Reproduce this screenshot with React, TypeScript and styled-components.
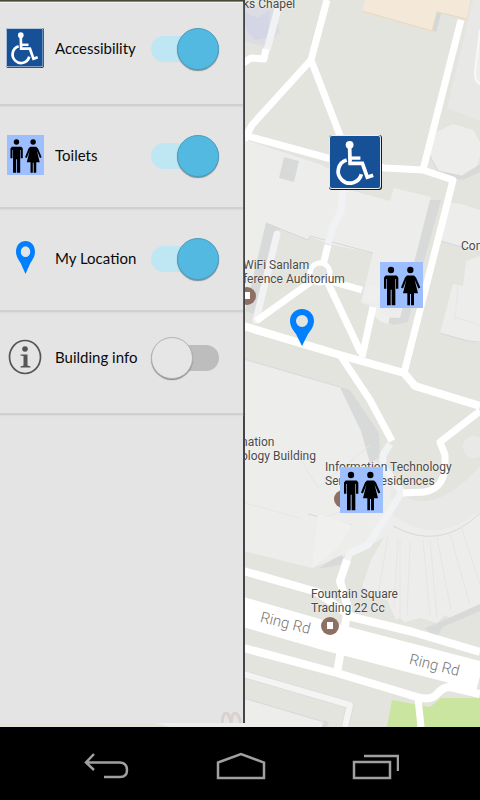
import React, { useState } from "react";
import styled, { createGlobalStyle } from "styled-components";

const GlobalStyle = createGlobalStyle`
  * { box-sizing: border-box; }
  body { margin: 0; background: #000; }
`;

const Screen = styled.div`
  display: flex;
  flex-direction: column;
  min-height: 100vh;
  overflow: hidden;
  font-family: Lato, "Liberation Sans", sans-serif;
`;

const Stage = styled.div`
  position: relative;
  flex: 1;
  display: flex;
  overflow: hidden;
  background: #e3e4de;
`;

const MapLayer = styled.main`
  position: absolute;
  inset: 0;
  overflow: hidden;
`;

const MapArt = styled.svg`
  display: block;
  width: 100%;
  height: 100%;
`;

const MapLabel = styled.div<{ $x: number; $y: number }>`
  position: absolute;
  left: ${(p) => p.$x}px;
  top: ${(p) => p.$y}px;
  font: 12px/14px Roboto, sans-serif;
  color: #4c4a48;
  white-space: pre;
  text-shadow: 0 0 2px #fff;
`;

const StreetLabel = styled(MapLabel)`
  font-size: 15px;
  font-weight: 300;
  line-height: 18px;
  color: #777;
  transform: rotate(14deg);
`;

const MapPin = styled.button<{ $x: number; $y: number; $w: number; $h: number }>`
  position: absolute;
  left: ${(p) => p.$x}px;
  top: ${(p) => p.$y}px;
  width: ${(p) => p.$w}px;
  height: ${(p) => p.$h}px;
  padding: 0;
  border: 0;
  background: none;
  cursor: pointer;
  svg { display: block; width: 100%; height: 100%; }
`;

const Drawer = styled.aside`
  position: relative;
  display: flex;
  flex-direction: column;
  width: 51%;
  margin-bottom: 4px;
  background: #e4e4e4;
  border-right: 2px solid #444547;
`;

const DrawerEdge = styled.div`
  height: 3px;
  background: linear-gradient(#454936 0 1px, #85877c 1px 2px, #f2f2f0 2px);
`;

const Row = styled.label<{ $lift?: boolean }>`
  display: grid;
  grid-template-columns: 50px 1fr 68px;
  column-gap: 5px;
  align-items: center;
  min-height: 103px;
  padding: 0 24px ${(p) => (p.$lift ? 12 : 4)}px 0;
  border-bottom: 2px solid #d0d0d0;
  box-shadow: 0 1px 1px #dcdcdc;
  font-size: 15px;
  line-height: 18px;
  color: #0a0a0a;
  white-space: nowrap;
  cursor: pointer;
`;

const RowIcon = styled.span<{ $w: number; $h: number }>`
  justify-self: center;
  width: ${(p) => p.$w}px;
  height: ${(p) => p.$h}px;
  svg { display: block; width: 100%; height: 100%; }
`;

const Switch = styled.input`
  appearance: none;
  display: grid;
  align-items: center;
  width: 68px;
  height: 40px;
  margin: 0;
  cursor: pointer;

  &::before,
  &::after {
    content: "";
    grid-area: 1 / 1;
  }
  &::before {
    height: 26px;
    margin-left: 4px;
    border-radius: 13px;
    background: #bdbdbd;
  }
  &::after {
    width: 40px;
    height: 40px;
    border-radius: 50%;
    border: 1px solid #b4b4b4;
    background: #e6e6e6;
    box-shadow: 0 1px 1px #858585;
  }
  &:checked::before {
    margin: 0 4px 0 0;
    background: #bfe6f3;
  }
  &:checked::after {
    justify-self: end;
    border-color: #479fbf;
    background: #54b9e0;
    box-shadow: 0 1px 1px #7c8c92;
  }
`;

const GhostMark = styled.svg`
  width: 22px;
  height: 11px;
  margin: auto 0 0 auto;
`;

const NavBar = styled.nav`
  display: grid;
  grid-template-columns: repeat(3, 1fr);
  align-items: center;
  height: 73px;
  padding: 5px 38px 0 40px;
  background: #000;
`;

const NavButton = styled.button`
  display: flex;
  justify-content: center;
  padding: 8px 0;
  border: 0;
  background: none;
  cursor: pointer;
`;

const WheelchairIcon = () => (
  <svg viewBox="0 0 54 56" preserveAspectRatio="none" aria-hidden="true">
    <rect width="54" height="56" rx="3" fill="#101820" />
    <rect width="53" height="55" rx="3" fill="#e8eef4" />
    <rect x="1" y="1" width="51" height="53" rx="2" fill="#165198" />
    <circle cx="21" cy="10" r="4" fill="#fff" />
    <path d="M21 12 21.500 29H34L39 43 45 41" fill="none" stroke="#fff" strokeWidth="3.800" />
    <path d="M21 23.500H32" stroke="#fff" strokeWidth="3.400" />
    <path d="M18 25.500A12 12 0 1 0 33 40" fill="none" stroke="#fff" strokeWidth="3.800" />
  </svg>
);

const ToiletsIcon = () => (
  <svg viewBox="0 0 129 137" preserveAspectRatio="none" aria-hidden="true">
    <rect width="129" height="137" fill="#9ebfff" />
    <circle cx="33" cy="24" r="9.500" />
    <path d="M17 40H50L55 46V80H48V51H46V129H35V83H32V129H21V51H19V80H12V46Z" />
    <circle cx="91" cy="24" r="9.500" />
    <path d="M81 40H102L108 46 121 76 115 79 104 53 114 93H102V129H93V95H90V129H82V93H69L79 53 69 79 63 76 75 46Z" />
  </svg>
);

const LocationIcon = () => (
  <svg viewBox="0 0 24 37" preserveAspectRatio="none" aria-hidden="true">
    <path fillRule="evenodd" fill="#007fff" d="M12 0C5 0 0 5 0 12C0 17 3 21 6 25L12 37L18 25C21 21 24 17 24 12C24 5 19 0 12 0ZM12 6A6 6 0 1 1 12 18A6 6 0 1 1 12 6Z" />
  </svg>
);

const InfoIcon = () => (
  <svg viewBox="0 0 34 36" aria-hidden="true">
    <ellipse cx="17" cy="18" rx="15.500" ry="16.500" fill="none" stroke="#555" strokeWidth="1.700" />
    <circle cx="17" cy="10" r="2.800" fill="#555" />
    <path d="M12.500 15.500H19.500V26.500L22.500 27.500V28.500H12.500V27.500L15.500 26.500V17L12.500 16.500Z" fill="#555" />
  </svg>
);

const Poi = ({ x, y }: { x: number; y: number }) => (
  <g>
    <circle cx={x} cy={y} r="9" fill="#8e6f64" />
    <rect x={x - 3} y={y - 4} width="6" height="7" fill="#fff" />
  </g>
);

const CampusMap = () => (
  <MapArt viewBox="0 0 480 727" preserveAspectRatio="xMinYMin slice" aria-hidden="true">
    <rect width="480" height="727" fill="#e3e4de" />

    <g fill="#ededec">
      <path d="M240 138 322 165 345 178 350 190 390 201 394 188 431 197 411 290 404 318Q395 324 379 317L376 309 361 302 373 253 333 245 310 237 308 240 266 223 246 310H240Z" />
      <path d="M448 202 437 240 480 252V210L461 204Z" />
      <path d="M453 284 463 286 466 261 480 256V343L440 333Z" />
      <path d="M240 358 340 387 361 431 372 460 383 465 402 493 389 534 368 547 350 553 312 568 240 550Z" />
      <path d="M393 514Q430 547 480 500V610L455 620 445 615 437 623 420 618 405 622 400 618 396 620 387 600 376 598 362 587 371 560 388 530Z" />
      <path d="M240 697 324 722 322 727H240Z" />
    </g>
    <path d="M473 0 447 108 480 121V0Z" fill="#e8e8e7" />
    <path d="M482 85Q474 82 475 72L480 30" fill="#eee" stroke="#f8f8f8" strokeWidth="2" />
    <path d="M365 0 362 11 432 31 437 12 467 19 470 0Z" fill="#f4e9d8" />
    <path d="M362 11 432 31 437 12 467 19" fill="none" stroke="#ead8bd" />
    <path d="M433 31 437 12 441 14 436 32Z" fill="#d3d8d7" />
    <path d="M240 6 275 8 280 33 263 46 240 40Z" fill="#dcdde2" />
    <path d="M244 12 258 18 270 10 268 38 255 40 246 30Z" fill="#d5d6e5" />
    <path d="M434 175 463 180 480 172V165L455 170Z" fill="#d8dada" />

    <g fill="#d7dad9">
      <path d="M284 157 299 161 294 182 279 178Z" />
      <path d="M430 200 441 200 422 268 408 322 393 325 379 317 400 318Z" />
      <path d="M266 223 280 228 257 315 245 311Z" />
      <path d="M340 387 350 390 379 433 380 457 370 463 361 431Z" />
      <path d="M333 559 342 555 344 564 318 569Z" />
      <path d="M440 622 480 604V611L443 627 436 638 425 628Z" />
      <path d="M324 720 329 722 327 727H322Z" />
    </g>
    <g fill="none" stroke="#d8d8dd">
      <path d="M266 223 308 240 310 236 373 253" />
      <path d="M437 240 480 252M440 333 467 341 480 342" />
      <path d="M240 358 340 387M240 697 324 722" />
      <path d="M308 514 352 525" />
      <path d="M391 508Q440 532 480 495M393 526Q440 552 480 513" />
    </g>
    <path d="M390 485Q428 525 480 466V510Q435 549 393 514Z" fill="#e9eae8" />
    <g fill="none" stroke="#e6e6e8" strokeWidth="1">
      <path d="M388 535 378 595M398 538 394 607M410 542 407 615M423 540 430 615M437 538 451 610M450 534 470 605M461 526 480 585" />
      <path d="M400 540 400 620M430 540 437 618" />
      <path d="M295 450 318 488 370 445M318 520 370 500M245 503 300 518" />
      <path d="M455 317 480 325M458 285 455 320" />
    </g>
    <path d="M318 514 352 525 338 548 312 568Z" fill="#f0f0ef" />

    <path d="M434 133 453 124 473 130 483 147 477 166 461 176 438 171 429 154Z" fill="#ededec" />
    <path d="M429 154 438 171 461 176" fill="none" stroke="#d6d6de" />
    <circle cx="474" cy="447" r="11" fill="#e9e9e8" />

    <g fill="none" stroke="#f1f2f3" strokeWidth="7" strokeLinejoin="round">
      <path d="M278 8 267 50M343 188 341 212 333 226 328 244" />
      <path d="M277 234 256 320" strokeLinecap="round" />
      <path d="M390 444 383 455V466L402 492 368 545 350 553 345 565" />
      <path d="M240 673 350 705 345 727" stroke="#dcdcdc" strokeWidth="8" />
      <path d="M240 673 350 705 345 727" stroke="#f4f4f4" strokeWidth="6" />
    </g>
    <path d="M362 300 377 304 380 288 369 285Z" fill="#efefee" />
    <path d="M389 320Q383 319 380 316L374 308" fill="none" stroke="#efefee" strokeWidth="8" />

    <g fill="none" stroke="#fff" strokeWidth="7" strokeLinejoin="round">
      <path d="M266 49 264 59 251 58 240 65" />
      <path d="M327 0 311 60 341 138" />
      <path d="M311 60 252 125 244 140" />
      <path d="M240 134 335 160 385 168 423 170 453 180 446 208 404 373" />
      <path d="M461 20 423 170" />
      <path d="M240 325 340 355 404 373 415 386 480 406" strokeWidth="8" />
      <path d="M340 355 370 400 392 441" />
      <path d="M480 411 440 442 445 455 445 468Q443 489 424 492L403 493" />
      <path d="M328 245 323 265M312 281 256 321M327 281 361 353M330 281 362 290M373 307 362 357" />
      <circle cx="320" cy="273" r="10" strokeWidth="5" />
      <path d="M240 570 317 592 352 617 413 632 480 652" strokeWidth="8" />
      <path d="M347 560 340 581 348 608 337 673" strokeWidth="8" />
      <path d="M240 611 330 637 480 676" strokeWidth="29" />
      <path d="M240 647 337 673 417 697Q431 701 437 694T450 687L480 694" strokeWidth="8" />
      <path d="M0 727H240" stroke="#ededea" strokeWidth="8" />
    </g>
    <path d="M0 723H155L170 727H0Z" fill="#e2e3d9" />
    <path d="M392 700 430 707 441 698H480V727H387Z" fill="#cae59f" />
    <path d="M418 698 421 727" stroke="#fff" strokeWidth="7" />

    <Poi x={247} y={296} />
    <Poi x={343} y={499} />
    <Poi x={330} y={626} />
  </MapArt>
);

const labels = [
  { x: 243, y: -3, text: "ks Chapel" },
  { x: 243, y: 258, text: "WiFi Sanlam\nference Auditorium" },
  { x: 461, y: 239, text: "Com" },
  { x: 241, y: 435, text: "nation\nology Building" },
  { x: 325, y: 460, text: "Information Technology\nServices Residences" },
  { x: 311, y: 587, text: "Fountain Square\nTrading 22 Cc" },
];

const rows = [
  { id: "access", text: "Accessibility", icon: <WheelchairIcon />, w: 38, h: 40, lift: true },
  { id: "toilets", text: "Toilets", icon: <ToiletsIcon />, w: 37, h: 40 },
  { id: "location", text: "My Location", icon: <LocationIcon />, w: 19, h: 33 },
  { id: "building", text: "Building info", icon: <InfoIcon />, w: 34, h: 36, lift: true },
];

export default function App() {
  const [on, setOn] = useState<Record<string, boolean>>({
    access: true,
    toilets: true,
    location: true,
    building: false,
  });

  return (
    <>
      <GlobalStyle />
      <Screen>
        <Stage>
          <MapLayer>
            <CampusMap />
            {labels.map((l) => (
              <MapLabel key={l.text} $x={l.x} $y={l.y}>{l.text}</MapLabel>
            ))}
            <StreetLabel $x={260} $y={614}>Ring Rd</StreetLabel>
            <StreetLabel $x={409} $y={656}>Ring Rd</StreetLabel>
            {on.access && (
              <MapPin $x={329} $y={135} $w={53} $h={55} aria-label="Accessible entrance"><WheelchairIcon /></MapPin>
            )}
            {on.toilets && (
              <>
                <MapPin $x={380} $y={262} $w={43} $h={46} aria-label="Toilets"><ToiletsIcon /></MapPin>
                <MapPin $x={340} $y={467} $w={43} $h={46} aria-label="Toilets"><ToiletsIcon /></MapPin>
              </>
            )}
            {on.location && (
              <MapPin $x={290} $y={309} $w={24} $h={37} aria-label="My location"><LocationIcon /></MapPin>
            )}
          </MapLayer>
          <Drawer>
            <DrawerEdge />
            {rows.map((r) => (
              <Row key={r.id} htmlFor={r.id} $lift={r.lift}>
                <RowIcon $w={r.w} $h={r.h}>{r.icon}</RowIcon>
                <span>{r.text}</span>
                <Switch
                  id={r.id}
                  type="checkbox"
                  role="switch"
                  checked={on[r.id]}
                  onChange={(e) => setOn({ ...on, [r.id]: e.target.checked })}
                />
              </Row>
            ))}
            <GhostMark viewBox="0 0 22 11" aria-hidden="true">
              <path d="M1 11Q2 1 5 1T10 11Q11 1 14 1T20 11" fill="none" stroke="#dccfcf" strokeWidth="3" />
            </GhostMark>
          </Drawer>
        </Stage>
        <NavBar>
          <NavButton aria-label="Back">
            <svg width="46" height="28" viewBox="0 0 46 28" fill="none" stroke="#a0a0a0" strokeWidth="2.500">
              <path d="M10 2 2 10.500 10 18M2 10.500H36Q43 11 43 18T36 25H20" />
            </svg>
          </NavButton>
          <NavButton aria-label="Home">
            <svg width="50" height="28" viewBox="0 0 50 28" fill="none" stroke="#a0a0a0" strokeWidth="2.500">
              <path d="M2 10.500 25 2 48 10.500V26H2Z" />
            </svg>
          </NavButton>
          <NavButton aria-label="Recent apps">
            <svg width="48" height="28" viewBox="0 0 48 28" fill="none" stroke="#a0a0a0" strokeWidth="2.500">
              <path d="M3 10H39V26H3ZM13 4H47V19" />
            </svg>
          </NavButton>
        </NavBar>
      </Screen>
    </>
  );
}
